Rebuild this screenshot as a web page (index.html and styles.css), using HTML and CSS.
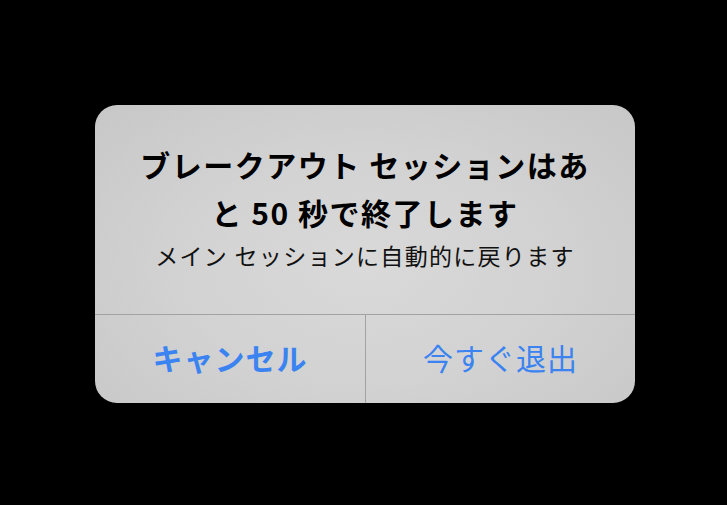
FILE: index.html
```html
<!DOCTYPE html>
<html lang="ja">
<head>
    <meta charset="UTF-8">
    <meta name="viewport" content="width=device-width, initial-scale=1.0">
    <title>ブレークアウト セッション</title>
    <link rel="stylesheet" href="styles.css">
</head>
<body>
    <div class="alert">
        <div class="alert-message">
            <h1 class="alert-title">ブレークアウト セッションはあと 50 秒で終了します</h1>
            <p class="alert-text">メイン セッションに自動的に戻ります</p>
        </div>
        <div class="alert-actions">
            <button class="alert-button cancel">キャンセル</button>
            <button class="alert-button">今すぐ退出</button>
        </div>
    </div>
</body>
</html>
```

FILE: styles.css
```css
html, body {
    margin: 0;
    padding: 0;
    background-color: #000;
    height: 100%;
}

body {
    font-family: "Noto Sans CJK JP", "Noto Sans", sans-serif;
    padding: 105px 0 0 95px;
    box-sizing: border-box;
}

.alert {
    width: 540px;
    height: 298px;
    border-radius: 22px;
    overflow: hidden;
    background: radial-gradient(ellipse 70% 80% at 50% 55%, #d9d9d9 0%, #d2d2d2 50%, #c7c7c7 100%);
    display: flex;
    flex-direction: column;
}

.alert-message {
    height: 209px;
    box-sizing: border-box;
    padding: 35px 36px 0;
    text-align: center;
}

.alert-title {
    margin: 0;
    font-size: 30px;
    font-weight: 700;
    line-height: 48px;
    letter-spacing: 1.5px;
    color: #000;
}

.alert-text {
    margin: 4px 0 0;
    font-size: 23px;
    line-height: 30px;
    letter-spacing: 1.3px;
    color: #111;
}

.alert-actions {
    flex: 1;
    display: grid;
    grid-template-columns: 270px 1fr;
    border-top: 1px solid #a2a2a2;
}

.alert-button {
    margin: 0;
    padding: 0 0 5px;
    border: none;
    background: transparent;
    font-family: inherit;
    font-size: 30px;
    letter-spacing: 1px;
    color: #3a83f1;
    cursor: pointer;
}

.alert-button + .alert-button {
    border-left: 1px solid #a2a2a2;
}

.alert-button.cancel {
    font-weight: 700;
}
```
